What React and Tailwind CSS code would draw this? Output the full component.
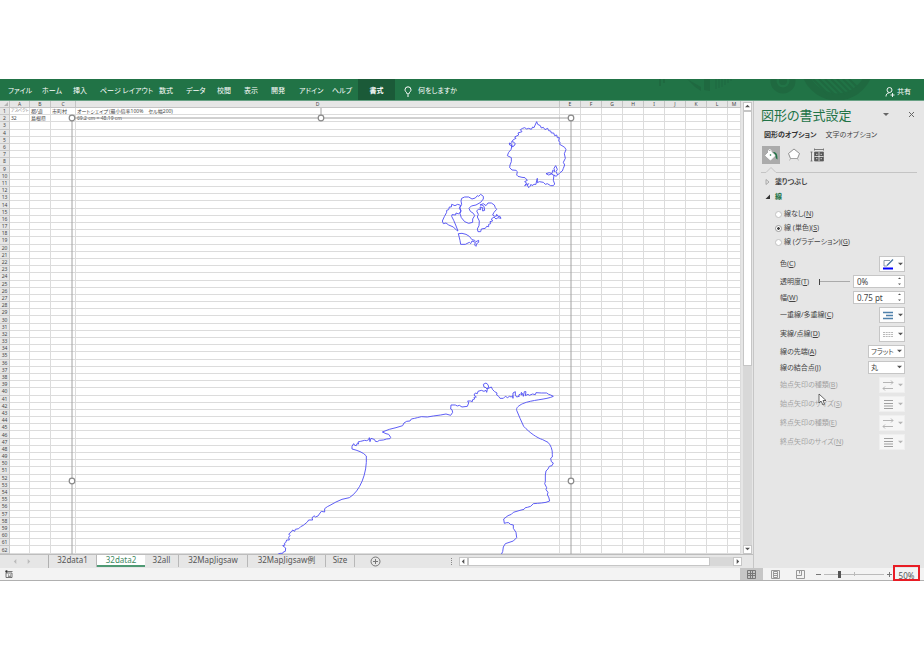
import React, { useState } from 'react';

const MENU = [
    { text: 'ファイル', width: 'w-[34px]' },
    { text: 'ホーム', width: 'w-[31px]' },
    { text: '挿入', width: 'w-[27px]' },
    { text: 'ページ レイアウト', width: 'w-[59px]' },
    { text: '数式', width: 'w-[27px]' },
    { text: 'データ', width: 'w-[31px]' },
    { text: '校閲', width: 'w-[27px]' },
    { text: '表示', width: 'w-[27px]' },
    { text: '開発', width: 'w-[28px]' },
    { text: 'アドイン', width: 'w-[33px]' },
    { text: 'ヘルプ', width: 'w-[26px]' },
];

const COLUMNS = [
    { name: 'A', width: 'w-[20px]' },
    { name: 'B', width: 'w-[21px]' },
    { name: 'C', width: 'w-[25px]' },
    { name: 'D', width: 'w-[484px]' },
    { name: 'E', width: 'w-[21px]' },
    { name: 'F', width: 'w-[21px]' },
    { name: 'G', width: 'w-[21px]' },
    { name: 'H', width: 'w-[21px]' },
    { name: 'I', width: 'w-[21px]' },
    { name: 'J', width: 'w-[21px]' },
    { name: 'K', width: 'w-[21px]' },
    { name: 'L', width: 'w-[21px]' },
    { name: 'M', width: '' },
];

const CELLS = {
    A1: 'アスペクト', B1: '都/道', C1: '市町村', D1: 'オートシェイプ（最小倍率100%　セル幅200)',
    A2: '32', B2: '島根県', D2: '69.2 cm × 48.19 cm',
};

const SHEETS = [
    { name: '32data1', width: 'w-[48px]' },
    { name: '32data2', width: 'w-[48px]' },
    { name: '32all', width: 'w-[34px]' },
    { name: '32MapJigsaw', width: 'w-[69px]' },
    { name: '32MapJigsaw例', width: 'w-[78px]' },
    { name: 'Size', width: 'w-[29px]' },
];

const Caret = ({ dir = 'down', size = 'w-[5px] h-[5px]', className = '' }) => {
    const paths = { down: 'M0 1h6L3 4z', up: 'M0 4h6L3 1z', left: 'M4 0v6L1 3z', right: 'M2 0v6l3-3z' };
    return (
        <svg viewBox="0 0 6 6" className={`${size} fill-current shrink-0 ${className}`} aria-hidden="true">
            <path d={paths[dir]} />
        </svg>
    );
};

const Ribbon = () => (
    <nav className="relative flex h-[22px] items-stretch bg-[#217346] border-b border-[#68a184] pl-2 text-[7px] text-white overflow-hidden">
        <svg className="absolute right-0 top-0 w-[304px] h-[21px]" viewBox="620 79 304 21" fill="none" stroke="#1f6940" aria-hidden="true">
            <circle cx="783" cy="81" r="9.500" strokeWidth="6" />
            <circle cx="783" cy="81" r="4" fill="#1f6940" stroke="none" />
            <path d="M687 79l14 8v4l-6-4zM704 79h6v12l-6-1z" fill="#1f6940" stroke="none" />
            <path d="M660 79v7M664 79v4" strokeWidth="2" />
            <path d="M716 79v10M719 79v9M722 79v8M725 79v6M728 79v4M731 79v2" />
            <circle cx="837" cy="64" r="33" strokeWidth="7" />
            <path d="M813 79l15 15M819 79l15 15M825 79l15 15M831 79l15 15M837 79l13 13M843 79l10 10M849 79l8 8" strokeWidth="2" />
        </svg>
        {MENU.map((m) => (
            <button key={m.text} className={`${m.width} pt-[4px] text-left whitespace-nowrap shrink-0`}>{m.text}</button>
        ))}
        <button className="w-[37px] pt-[4px] shrink-0 bg-[#1b5a38] font-bold">書式</button>
        <button className="ml-[9px] pt-[4px] flex items-center gap-[6px] whitespace-nowrap">
            <svg viewBox="0 0 8 11" className="w-[8px] h-[11px]" fill="none" stroke="#fff" aria-hidden="true">
                <path d="M3 8V7C2 6 1 5 1 3.800a3 3 0 0 1 6 0C7 5 6 6 5 7v1zM3 10h2" />
            </svg>
            何をしますか
        </button>
        <button className="relative ml-auto mr-[13px] pt-[5px] flex items-center gap-[2px] whitespace-nowrap">
            <svg viewBox="0 0 10 10" className="w-[10px] h-[10px]" fill="none" stroke="#fff" strokeWidth=".9" aria-hidden="true">
                <circle cx="4.500" cy="3" r="2.500" />
                <path d="M1 9.500C1 7.500 2 5.800 4.500 5.800M5.500 8h4M7.500 6v4" />
            </svg>
            共有
        </button>
    </nav>
);

const Handle = ({ x, y }) => <circle cx={x} cy={y} r="2.800" fill="#fff" stroke="#8a8a8a" strokeWidth="1.200" />;

// Map outlines, drawn on the sheet at 1/3 scale
const Shapes = () => (
    <svg className="absolute left-0 top-0 w-[741px] h-[453px] pointer-events-none" viewBox="0 101 741 453" fill="none" aria-hidden="true">
        <path d="M72 554V118H571V554M321 118V108" stroke="#a2a2a2" />
        <g stroke="#5252f4" strokeWidth="2.800" strokeLinejoin="round">
            <g transform="translate(430 115) scale(.33333)">
                <path d="M320 20L323 28 331 32 334 39 340 37 345 44 353 40 356 47 362 48 364 54 371 54 374 62 380 60 382 68 388 68 386 78 390 82 389 88 396 92 404 97 408 104 403 116 406 130 400 142 404 150 400 160 397 168 390 173 383 180 378 184 372 180 370 196 374 207 370 212 362 212 352 206 346 208 340 202 328 200 322 203 322 190 320 196 318 208 312 208 306 212 303 208 300 214 296 218 292 210 296 206 284 212 290 204 284 200 292 196 285 188 276 187 264 184 260 180 262 170 258 166 246 165 239 158 240 150 244 140 244 128 232 122 236 112 243 104 246 92 239 90 238 84 246 88 245 96 252 93 256 86 249 80 244 82 250 74 258 70 254 66 266 60 264 54 276 50 271 44 278 40 284 38 290 42 296 40 304 43 308 36 312 38z" />
                <path d="M383 180L378 170 382 163 377 152 372 160 374 170 368 166 366 176 358 173 348 176 356 180 364 177 374 182" />
                <path d="M65 268L75 272 83 268 92 271 88 280 93 288 86 297 78 294 77 300 66 299 65 304 71 316 77 330 84 348 80 346 70 336 56 330 48 324 40 326 37 318 43 305 50 292 50 286 56 284 58 276 64 276z" />
                <path d="M95 250L104 246 116 246 126 252 136 249 142 242 146 244 152 238 160 244 160 252 152 262 138 270 124 273 117 280 121 289 130 295 134 302 128 312 128 322 116 325 104 320 94 308 90 296 93 288 90 278 95 268 93 258z" />
                <path d="M150 270L160 266 168 272 174 264 184 264 193 270 196 278 200 283 192 292 188 300 194 304 200 303 200 298 204 304 210 304 213 310 204 308 198 312 192 306 184 312 188 318 180 320 182 326 176 328 176 335 170 334 166 340 154 342 152 350 144 350 142 342 147 332 148 318 142 306 145 298 140 288 146 282 152 284 150 276 158 278 158 288 164 286 162 274 156 270z" />
                <path d="M85 356L96 355 108 358 118 364 126 374 134 376 138 380 146 376 146 382 140 386 138 394 134 390 136 382 126 378 122 386 118 382 106 388 92 388 90 376z" />
            </g>
            <path
                transform="translate(260 430) scale(.33333)"
                d="M53 373L60 370 68 370 70 366 76 364 77 354 68 347 75 345 73 340 77 338 80 330 88 330 86 322 90 316 86 312 94 306 98 300 104 304 106 298 116 296 122 290 130 286 142 276 146 270 158 270 156 264 162 257 166 261 174 258 178 252 184 244 194 246 194 236 202 230 210 226 228 216 246 208 268 203C300 184 322 130 319 78"
            />
            <path
                transform="translate(340 375) scale(.33333)"
                d="M79 243C70 232 52 226 36 222L36 214 41 206 44 211 49 212 51 206 56 207 54 201 62 199 74 196 80 197 86 194 88 188 90 200 93 190 99 192 104 194 106 199 112 200 118 196 130 195 140 192 150 191 152 187 146 178 138 176 127 171 148 163 168 158 188 152 192 144 200 139 210 138 214 132 224 130 232 128 244 125 262 126 280 123 302 120 318 117 332 121 338 112 336 104 332 102 333 90 346 90 352 93 358 91 366 96 382 94 386 84 383 78 392 78 397 80 398 74 404 72 402 67 409 66 402 60 406 54 412 56 414 49 424 46 432 49 438 46 440 52 442 44 438 38 432 36 430 28 438 24 444 29 446 36 441 42 454 36 458 44 464 50 471 54 470 60 476 64 480 70 490 70 496 64 503 68 508 64 514 66 518 62 519 70 519 54 526 50 526 60 530 66 538 64 536 60 541 57 546 60 544 52 548 56 550 64 553 50 558 50 556 62 564 58 568 61 578 57 586 59 588 53 604 54 620 54 626 58 632 60 640 64C620 74 575 74 548 86C536 92 528 98 530 106C536 122 544 138 551 154C570 174 590 188 608 194L624 202C632 210 638 224 637 238L637 246 632 250 634 260 640 264 636 272 628 274 624 282 618 288 616 300 616 320 614 326 620 338 618 344 624 352 622 360 626 366 629 378 618 382 604 384 592 385 580 386 572 394 562 397 556 398 552 403 540 406 520 412 514 418 504 422 491 432 493 445 500 443 506 443 511 448 520 450 520 460 528 472 530 488 520 498 496 506 490 516 488 530 484 538"
            />
        </g>
        <Handle x="72" y="118" />
        <Handle x="321" y="118" />
        <Handle x="571" y="118" />
        <Handle x="72" y="481" />
        <Handle x="571" y="481" />
    </svg>
);

const Sheet = () => (
    <div className="relative flex-1 min-w-0 overflow-hidden">
        <table className="w-full h-[453px] table-fixed border-separate border-spacing-0 text-[5px] leading-[6px] text-[#444]">
            <thead>
                <tr className="bg-[#e6e6e6]">
                    <th className="w-[10px] h-[7px] p-0 border-r border-b border-[#c4c4c4]">
                        <svg viewBox="0 0 5 5" className="ml-auto w-[5px] h-[5px] fill-[#b4b4b4]" aria-hidden="true"><path d="M4 0v4H0z" /></svg>
                    </th>
                    {COLUMNS.map((c) => (
                        <th key={c.name} scope="col" className={`${c.width} h-[7px] p-0 border-r border-b border-[#c4c4c4] font-normal`}>{c.name}</th>
                    ))}
                </tr>
            </thead>
            <tbody>
                {Array.from({ length: 62 }, (_, i) => i + 1).map((row) => (
                    <tr key={row}>
                        <th scope="row" className="p-0 border-r border-b border-[#c8c8c8] bg-[#e6e6e6] font-normal">{row}</th>
                        {COLUMNS.map((c) => (
                            <td
                                key={c.name}
                                className={`p-0 pl-[1px] border-r border-b border-[#dcdcdc] whitespace-nowrap overflow-hidden ${
                                    c.name + row === 'A1' ? 'text-[4px] text-[#888]' : ''
                                }`}
                            >
                                {CELLS[c.name + row]}
                            </td>
                        ))}
                    </tr>
                ))}
            </tbody>
        </table>
        <Shapes />
    </div>
);

const ScrollButton = ({ dir, label }) => (
    <button aria-label={label} className="w-[9px] h-[9px] shrink-0 flex items-center justify-center bg-white border border-[#c6c6c6] text-[#555]">
        <Caret dir={dir} />
    </button>
);

const SheetTabs = ({ active, onSelect }) => (
    <div className="flex h-[14px] items-center bg-[#e6e6e6] border-t border-[#bdbdbd] text-[8px] text-[#555]">
        <button aria-label="前のシート" className="ml-[13px] text-[#bbb]"><Caret dir="left" /></button>
        <button aria-label="次のシート" className="ml-[8px] text-[#bbb]"><Caret dir="right" /></button>
        <div className="ml-[17px] flex items-start self-stretch border-l border-[#b0b0b0]">
            {SHEETS.map((s) => (
                <button
                    key={s.name}
                    onClick={() => onSelect(s.name)}
                    className={`${s.width} h-[12px] flex justify-center leading-[10px] whitespace-nowrap ${
                        s.name === active ? 'bg-white text-[#3f8a62] border-b-2 border-[#4f9a74]' : 'border-r border-[#b8b8b8]'
                    }`}
                >
                    {s.name}
                </button>
            ))}
        </div>
        <button aria-label="新しいシート" className="ml-[15px]">
            <svg viewBox="0 0 11 11" className="w-[11px] h-[11px]" fill="none" stroke="#777" aria-hidden="true">
                <circle cx="5.500" cy="5.500" r="4.500" />
                <path d="M5.500 3v5M3 5.500h5" />
            </svg>
        </button>
        <div className="ml-auto mr-[11px] flex items-center">
            <span className="mr-[7px] h-[7px] border-l border-dotted border-[#888]" />
            <ScrollButton dir="left" label="左へスクロール" />
            <div className="w-[265px] h-[9px] bg-[#d8d8d8]">
                <div className="w-[242px] h-[9px] bg-white border border-[#c6c6c6]" />
            </div>
            <ScrollButton dir="right" label="右へスクロール" />
        </div>
    </div>
);

const Radio = ({ id, label, shortcut, checked, onChange }) => (
    <div className="flex h-[14px] items-center gap-[2px]">
        <input
            type="radio"
            name="line"
            id={id}
            checked={checked}
            onChange={onChange}
            className="appearance-none w-[7px] h-[7px] rounded-full bg-white border border-[#c2c2c2] checked:border-[#999] checked:bg-[radial-gradient(#444_30%,#fff_45%)]"
        />
        <label htmlFor={id}>{label}(<u>{shortcut}</u>)</label>
    </div>
);

const Row = ({ id, label, shortcut, small, disabled, children }) => (
    <div className={`flex items-center justify-between ${small ? 'h-[13px]' : 'h-[16px]'} ${disabled ? 'text-[#a3a3a3]' : ''}`}>
        <label htmlFor={id} className="whitespace-nowrap">{label}(<u>{shortcut}</u>)</label>
        {children}
    </div>
);

const ICONS = {
    color: (
        <>
            <path d="M8 1.500H2V7h3" stroke="#8a9aa8" />
            <path d="M11 .5L5 6.500" stroke="#41719c" strokeWidth="1.300" />
            <path d="M1 9.500h10" stroke="#0000ff" strokeWidth="2" />
        </>
    ),
    compound: <path d="M1 2.500h10M4 5.500h7M1 8.500h10" stroke="#4f81ab" strokeWidth="1.300" />,
    dash: <path d="M1 3.500h10M1 5.500h10M1 7.500h10" stroke="#b8b8b8" strokeDasharray="2 .7" />,
    arrow: <path d="M1 2.500h10M9 .5l2 2-2 2M11 8.500H1M3 6.500l-2 2 2 2" stroke="#b5b5b5" />,
    size: <path d="M2 1.500h9M2 4.500h9M2 7h9M2 9.500h9" stroke="#a0a0a0" strokeWidth="1.200" />,
};

const IconButton = ({ id, icon, disabled }) => (
    <button
        id={id}
        disabled={disabled}
        className={`w-[26px] h-full flex items-center justify-center gap-[4px] border ${
            disabled ? 'bg-[#f6f6f6] border-[#efefef] text-[#b5b5b5]' : 'bg-[#fdfdfd] border-[#c6c6c6] text-[#555]'
        }`}
    >
        <svg viewBox="0 0 12 11" className="w-[12px] h-[11px]" fill="none" aria-hidden="true">{ICONS[icon]}</svg>
        <Caret />
    </button>
);

const Spinner = ({ id, value, onChange }) => (
    <div className="w-[52px] h-full flex items-center justify-between bg-white border border-[#c6c6c6] px-[3px]">
        <input id={id} value={value} onChange={onChange} className="w-[38px] h-[11px] bg-transparent outline-none text-[8px]" />
        <span className="flex flex-col gap-[3px] text-[#555]">
            <Caret dir="up" size="w-[3px] h-[3px]" />
            <Caret size="w-[3px] h-[3px]" />
        </span>
    </div>
);

const Select = ({ id, option }) => (
    <div className="relative w-[37px] h-full">
        <select id={id} className="appearance-none w-full h-full pl-[2px] bg-white border border-[#c6c6c6] outline-none">
            <option>{option}</option>
        </select>
        <Caret className="absolute right-[3px] top-[4px] pointer-events-none text-[#555]" />
    </div>
);

const FormatPane = () => {
    const [line, setLine] = useState('solid');
    const [alpha, setAlpha] = useState('0%');
    const [width, setWidth] = useState('0.75 pt');

    return (
        <aside className="relative w-[171px] shrink-0 bg-[#e6e6e6] border-l border-[#c6c6c6] pl-[7px] pr-[7px] text-[7px] leading-[10px] text-[#444]">
            <header className="flex h-[27px] items-center">
                <h2 className="text-[13px] leading-[18px] text-[#217346] whitespace-nowrap">図形の書式設定</h2>
                <button aria-label="オプション" className="ml-auto mr-[19px] text-[#666]"><Caret size="w-[6px] h-[6px]" /></button>
                <button aria-label="閉じる" className="mr-[2px]">
                    <svg viewBox="0 0 7 7" className="w-[7px] h-[7px]" fill="none" stroke="#666" aria-hidden="true"><path d="M1 1l5 5M6 1L1 6" /></svg>
                </button>
            </header>
            <div className="flex h-[14px] items-center gap-[9px] pl-[3px] whitespace-nowrap">
                <button className="font-bold text-[#333]">図形のオプション</button>
                <button>文字のオプション</button>
            </div>
            <div className="mt-[4px] ml-px flex items-center gap-[5px]">
                <button aria-label="塗りつぶしと線" className="w-[18px] h-[18px] flex items-center justify-center bg-[#ababab]">
                    <svg viewBox="0 0 14 14" className="w-[14px] h-[14px]" fill="none" aria-hidden="true">
                        <path d="M6 3l5 4.500L6.500 12 1.500 7.500z" fill="#fff" stroke="#fff" />
                        <path d="M4.500 6V3c0-2 2.500-2 2.500 0v3" stroke="#fff" />
                        <path d="M9 4c3.500 0 4.500 2 4.500 7.500-2-.5-2-3-2-4.500z" fill="#217346" />
                        <circle cx="6.500" cy="7" r=".8" fill="#217346" />
                    </svg>
                </button>
                <button aria-label="効果" className="w-[18px] h-[18px] flex items-center justify-center">
                    <svg viewBox="0 0 14 14" className="w-[14px] h-[14px]" fill="#fff" stroke="#777" strokeWidth=".8" aria-hidden="true">
                        <path d="M7 1l5.500 4.500-2 5h-7l-2-5z" />
                        <path d="M2.500 12.500l1-2h7l1 2" fill="none" stroke="#aaa" />
                    </svg>
                </button>
                <button aria-label="サイズとプロパティ" className="w-[18px] h-[18px] flex items-center justify-center">
                    <svg viewBox="0 0 14 14" className="w-[14px] h-[14px]" fill="none" stroke="#666" strokeWidth=".8" aria-hidden="true">
                        <path d="M1.500 4v9M.5 4h2M.5 13h2M4.500 1.500h9M4.500.5v2M13.500.5v2" />
                        <path d="M4.500 4h9v9h-9z" fill="#555" />
                        <path d="M9 4v9M4.500 8.500h9M6 6.300h1.500M10.500 6.300H12M6 10.700h1.500M10.500 10.700H12" stroke="#eee" />
                    </svg>
                </button>
            </div>
            <svg viewBox="0 0 156 6" className="mt-[3px] w-full h-[6px]" fill="none" stroke="#c4c4c4" aria-hidden="true">
                <path d="M0 5.500h5l5-5 5 5h141" />
            </svg>
            <button className="mt-px flex h-[15px] items-center gap-[5px] pl-[4px] font-bold">
                <svg viewBox="0 0 5 6" className="w-[5px] h-[6px]" fill="none" stroke="#999" strokeWidth=".8" aria-hidden="true"><path d="M1 .5v5L4 3z" /></svg>
                塗りつぶし
            </button>
            <button className="flex h-[15px] items-center gap-[4px] pl-[4px] font-bold text-[#217346]">
                <svg viewBox="0 0 6 6" className="w-[6px] h-[6px]" aria-hidden="true"><path d="M5 .5V5H.5z" fill="#333" /></svg>
                線
            </button>
            <fieldset className="mt-[3px] pl-[14px]">
                <Radio id="line-none" label="線なし" shortcut="N" checked={line === 'none'} onChange={() => setLine('none')} />
                <Radio id="line-solid" label="線 (単色)" shortcut="S" checked={line === 'solid'} onChange={() => setLine('solid')} />
                <Radio id="line-gradient" label="線 (グラデーション)" shortcut="G" checked={line === 'gradient'} onChange={() => setLine('gradient')} />
            </fieldset>
            <div className="mt-[7px] flex flex-col gap-[3px] pl-[19px] pr-[12px]">
                <Row id="color" label="色" shortcut="C"><IconButton id="color" icon="color" /></Row>
                <Row id="alpha" label="透明度" shortcut="T" small>
                    <input
                        type="range"
                        aria-label="透明度スライダー"
                        defaultValue="0"
                        className="appearance-none w-[31px] h-[7px] ml-auto mr-[3px] bg-[linear-gradient(#aaa,#aaa)] bg-[length:100%_1px] bg-center bg-no-repeat [&::-webkit-slider-thumb]:appearance-none [&::-webkit-slider-thumb]:w-px [&::-webkit-slider-thumb]:h-[6px] [&::-webkit-slider-thumb]:bg-[#444]"
                    />
                    <Spinner id="alpha" value={alpha} onChange={(e) => setAlpha(e.target.value)} />
                </Row>
                <Row id="width" label="幅" shortcut="W" small>
                    <Spinner id="width" value={width} onChange={(e) => setWidth(e.target.value)} />
                </Row>
                <Row id="compound" label="一重線/多重線" shortcut="C"><IconButton id="compound" icon="compound" /></Row>
                <Row id="dash" label="実線/点線" shortcut="D"><IconButton id="dash" icon="dash" /></Row>
                <Row id="cap" label="線の先端" shortcut="A" small><Select id="cap" option="フラット" /></Row>
                <Row id="join" label="線の結合点" shortcut="J" small><Select id="join" option="丸" /></Row>
                <Row id="begin-type" label="始点矢印の種類" shortcut="B" disabled><IconButton id="begin-type" icon="arrow" disabled /></Row>
                <Row id="begin-size" label="始点矢印のサイズ" shortcut="S" disabled><IconButton id="begin-size" icon="size" disabled /></Row>
                <Row id="end-type" label="終点矢印の種類" shortcut="E" disabled><IconButton id="end-type" icon="arrow" disabled /></Row>
                <Row id="end-size" label="終点矢印のサイズ" shortcut="N" disabled><IconButton id="end-size" icon="size" disabled /></Row>
            </div>
            {/* mouse pointer */}
            <svg className="absolute left-[64px] top-[292px] w-[9px] h-[13px]" viewBox="0 0 9 13" fill="#fff" stroke="#444" strokeWidth=".8" aria-hidden="true">
                <path d="M1 1v9l2-2 2 4 1.500-.7L5 7.500h3z" />
            </svg>
        </aside>
    );
};

const StatusBar = () => (
    <footer className="flex h-[13px] items-center bg-[#f3f3f3] border-b border-[#b0b0b0] text-[8px] text-[#555]">
        <button aria-label="マクロの記録" className="ml-[5px]">
            <svg viewBox="0 0 8 8" className="w-[8px] h-[8px]" fill="none" stroke="#555" strokeWidth=".8" aria-hidden="true">
                <path d="M1 3v4.500h6V3zM3 1.500h4.500M3 5h1M5 5h1M3 6.300h3" />
                <circle cx="1.500" cy="1.500" r="1" fill="#333" />
            </svg>
        </button>
        <button aria-label="標準" className="ml-auto w-[23px] h-full flex items-center justify-center bg-[#c6c6c6]">
            <svg viewBox="0 0 9 9" className="w-[9px] h-[9px]" fill="none" stroke="#777" aria-hidden="true"><path d="M.5.5h8v8h-8zM3.500.5v8M5.500.5v8M.5 3.500h8M.5 5.500h8" /></svg>
        </button>
        <button aria-label="ページ レイアウト" className="w-[25px] flex justify-center">
            <svg viewBox="0 0 9 9" className="w-[9px] h-[9px]" fill="none" stroke="#999" aria-hidden="true"><path d="M.5.5h8v8h-8zM2.500 1.500v6h4v-6zM3 3.500h3M3 5.500h3" /></svg>
        </button>
        <button aria-label="改ページ プレビュー" className="w-[25px] flex justify-center">
            <svg viewBox="0 0 9 9" className="w-[9px] h-[9px]" fill="none" stroke="#999" aria-hidden="true"><path d="M.5.5h8v8h-8zM.5 5.500h5V.5M3.500.5v3" /></svg>
        </button>
        <button aria-label="縮小" className="ml-px w-[8px] flex justify-center">
            <svg viewBox="0 0 5 5" className="w-[5px] h-[5px]" stroke="#777" aria-hidden="true"><path d="M0 2.500h5" /></svg>
        </button>
        <input
            type="range"
            aria-label="ズーム"
            min="0"
            max="200"
            defaultValue="48"
            className="appearance-none w-[60px] h-[8px] mx-[2px] bg-[linear-gradient(#bbb,#bbb),linear-gradient(#bbb,#bbb)] bg-[length:100%_1px,1px_4px] bg-center bg-no-repeat [&::-webkit-slider-thumb]:appearance-none [&::-webkit-slider-thumb]:w-[3px] [&::-webkit-slider-thumb]:h-[7px] [&::-webkit-slider-thumb]:bg-[#555]"
        />
        <button aria-label="拡大" className="w-[7px] flex justify-center">
            <svg viewBox="0 0 5 5" className="w-[5px] h-[5px]" stroke="#777" aria-hidden="true"><path d="M0 2.500h5M2.500 0v5" /></svg>
        </button>
        <button className="relative z-10 -mt-[3px] mb-[-1px] mr-[4px] w-[27px] h-[16px] pt-[4px] leading-[10px] border-2 border-[#e81c24]">50%</button>
    </footer>
);

function App() {
    const [sheet, setSheet] = useState('32data2');

    return (
        <div className="min-h-screen bg-white pt-[79px] font-['Noto_Sans','Noto_Sans_CJK_JP',sans-serif] [font-feature-settings:'palt']">
            <Ribbon />
            <main className="flex">
                <div className="flex-1 min-w-0">
                    <div className="flex">
                        <Sheet />
                        <div className="w-[12px] pl-[2px] pt-px shrink-0 flex flex-col bg-[#e6e6e6]">
                            <ScrollButton dir="up" label="上へスクロール" />
                            <div className="flex-1 w-[9px] bg-[#d8d8d8]">
                                <div className="h-[255px] bg-white border border-[#c6c6c6]" />
                            </div>
                            <ScrollButton dir="down" label="下へスクロール" />
                        </div>
                    </div>
                    <SheetTabs active={sheet} onSelect={setSheet} />
                </div>
                <FormatPane />
            </main>
            <StatusBar />
        </div>
    );
}

export default App;
